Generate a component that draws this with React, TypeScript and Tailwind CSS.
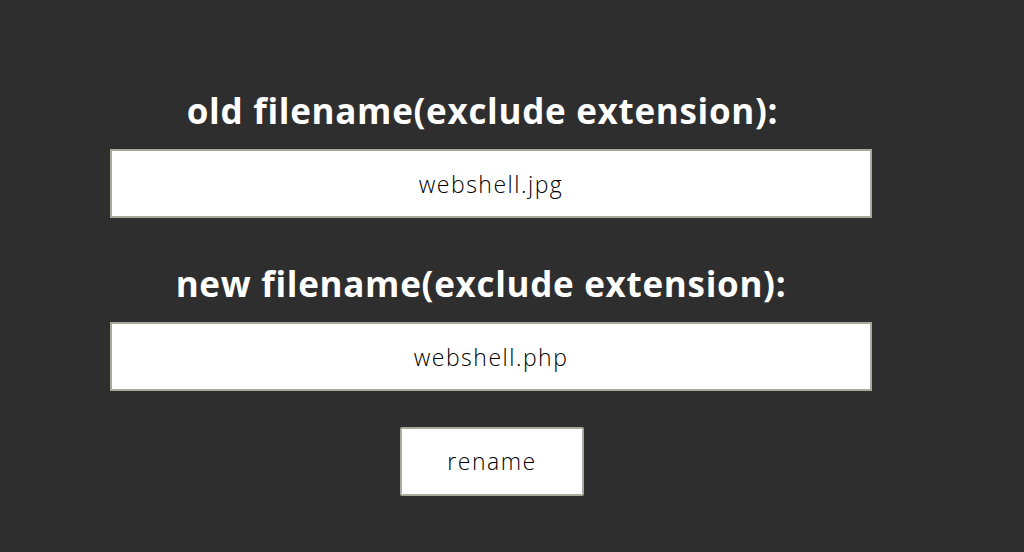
export default function App() {
  return (
    <div className="h-[552px] w-full bg-[#2e2e2e] font-['Open_Sans',sans-serif] overflow-hidden">
      <div className="ml-[110px] w-[762px] pt-[89px] flex flex-col items-center">
        <h2 className="pr-[17px] text-[35px] leading-[44px] font-bold text-white tracking-[0.7px] whitespace-nowrap">
          old filename(exclude extension):
        </h2>
        <input
          defaultValue="webshell.jpg"
          className="mt-[16px] w-full h-[69px] bg-white border-2 border-[#aaaa9c] text-center text-[23px] tracking-[1.5px] text-[#000] outline-none font-light"
        />
        <h2 className="mt-[44px] pr-[20px] text-[35px] leading-[44px] font-bold text-white tracking-[0.7px] whitespace-nowrap">
          new filename(exclude extension):
        </h2>
        <input
          defaultValue="webshell.php"
          className="mt-[16px] w-full h-[69px] bg-white border-2 border-[#aaaa9c] text-center text-[23px] tracking-[1.5px] text-[#000] outline-none font-light"
        />
        <button className="mt-[36px] ml-[2px] w-[184px] h-[69px] bg-white border-2 border-[#aaaa9c] rounded-[2px] text-[23px] tracking-[1.5px] text-[#000] font-light">
          rename
        </button>
      </div>
    </div>
  );
}
